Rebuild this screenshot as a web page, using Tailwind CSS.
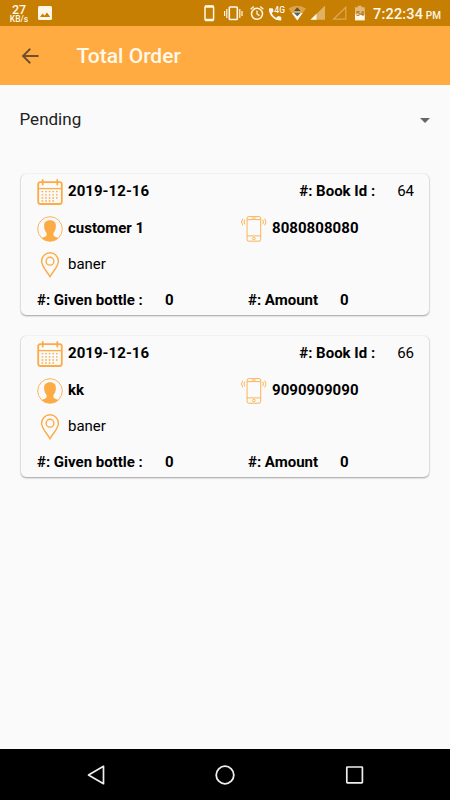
<!DOCTYPE html>
<html lang="en">
<head>
    <meta charset="UTF-8">
    <meta name="viewport" content="width=device-width, initial-scale=1.0">
    <title>Total Order</title>
    <script src="https://cdn.jsdelivr.net/npm/@tailwindcss/browser@4"></script>
</head>
<body class="bg-[#fafafa] font-['Roboto',sans-serif] text-black">
    <!-- shared icons -->
    <svg class="hidden">
        <symbol id="calendar" viewBox="0 0 26 26">
            <g fill="none" stroke="#fcab45">
                <rect x="1.2" y="3.2" width="23.6" height="21.8" rx="2.2" stroke-width="1.8"/>
                <path d="M1.5 9.6h23" stroke-width="1.3"/>
                <path d="M5.7 1v4.5M20.3 1v4.5" stroke-width="1.8" stroke-linecap="round"/>
                <path d="M4.600 12.600h17.500M4.600 15.800h17.500M4.600 19h17.500M4.600 22h14" stroke-width="1.300" stroke-dasharray="1.600 2"/>
            </g>
        </symbol>
        <symbol id="user" viewBox="0 0 26 26">
            <circle cx="13" cy="13" r="12.3" fill="none" stroke="#fcab45" stroke-width=".9"/>
            <path fill="#fcab45" d="M13 4.200c3.900 0 6 2.200 5.900 5.700 0 1.800-.3 3.400-1 4.800-.4.900-.9 1.700-1.500 2.300v2.400c.8 1.300 3.700 1.600 5.100 2.700C19.200 24.300 16.300 25.300 13 25.300s-6.200-1-8.500-3.200c1.400-1.100 4.300-1.400 5.100-2.700v-2.400c-.6-.6-1.100-1.400-1.500-2.300-.7-1.400-1-3-1-4.800C7 6.400 9.100 4.200 13 4.200z"/>
        </symbol>
        <symbol id="pin" viewBox="0 0 26 26">
            <g fill="none" stroke="#fcab45" stroke-width="1.4">
                <path d="M13 24.800C10.500 20 4.600 14.500 4.600 9.200a8.400 8.400 0 0 1 16.800 0C21.400 14.500 15.500 20 13 24.800z"/>
                <circle cx="13" cy="9.200" r="3.900"/>
            </g>
        </symbol>
        <symbol id="phone" viewBox="0 0 26 26">
            <g fill="none" stroke="#fcab45" stroke-width=".9">
                <rect x="6.100" y=".6" width="13.600" height="24.600" rx="1.600"/>
                <path d="M6.100 3.600h13.600M6.100 19.900h13.600M11.100 2.100h3.600"/>
                <circle cx="12.900" cy="22.500" r="1.300"/>
                <path d="M3.800 3.700q-1.500 2.300 0 4.600M1.800 2.600q-2.600 3.400 0 6.800M21.700 3.700q1.500 2.300 0 4.600M23.700 2.600q2.600 3.400 0 6.800"/>
            </g>
        </symbol>
    </svg>

    <div class="flex h-[800px] w-[450px] flex-col overflow-hidden">
        <!-- status bar -->
        <div class="flex h-[26px] shrink-0 items-center justify-between bg-[#c67e03] pr-[9px] pl-[9px] text-[#fff8e8]">
            <div class="flex items-center gap-[9px]">
                <div class="flex w-5 flex-col items-center pt-px font-medium">
                    <span class="text-[12.5px] leading-[11px]">27</span>
                    <span class="text-[8.5px] leading-[9px]">KB/s</span>
                </div>
                <svg class="size-[14px]" viewBox="0 0 14 14">
                    <rect width="14" height="14" rx="1.5" fill="#fff8e8"/>
                    <path d="M2 11l2.600-3.500 1.900 2.200L9 6.400 12.200 11z" fill="#c67e03"/>
                </svg>
            </div>
            <div class="flex items-center">
                <svg class="h-[26px] w-[164px]" viewBox="204 0 164 26">
                    <g fill="none" stroke="#fff8e8">
                        <rect x="205" y="6.300" width="8.600" height="14" rx="1" stroke-width="1.500"/>
                        <path d="M205 6.500h8.600M205 20h8.600" stroke-width="2.400"/>
                        <rect x="229.300" y="7" width="8" height="12.500" rx=".8" stroke-width="1.600"/>
                        <path d="M226.800 9v9M224.600 11v5M239.800 9v9M242 11v5" stroke-width="1.200"/>
                        <circle cx="257" cy="13.800" r="5.500" stroke-width="1.500"/>
                        <path d="M257 10.500v3.500l2.500 1.600M250.700 9.200l3-2.600M263.300 9.200l-3-2.600" stroke-width="1.300"/>
                    </g>
                    <path fill="#fff8e8" d="M269.600 8.300h2.700c.4 0 .6.200.7.600l.5 2.400-1.700 1.900c1.100 2 2.500 3.500 4.500 4.600l1.900-1.700 2.500.6c.4.100.6.300.6.700v2.500c0 .4-.3.700-.7.700C274 20.600 269 15.200 268.900 9c0-.4.300-.7.700-.7z"/>
                    <text x="274.300" y="12.800" font-size="8.500" font-weight="500" fill="#fff8e8">4G</text>
                    <path d="M288.500 8.500q8.500-5.500 17.500 0L297.300 20.500z" fill="#d9a44a"/>
                    <path d="M291.800 13h10.800l-5.300 7.500z" fill="#fff8e8"/>
                    <path d="M294 11l3.300-3.800 3.300 3.800z" fill="#5e4c33"/>
                    <path d="M294 13h6.600l-3.300 3.200z" fill="#3c6291"/>
                    <path d="M310.500 19.700L325 5.500v14.200z" fill="#e0b163"/>
                    <path d="M310.500 19.700L316.500 13.800v5.900z" fill="#fff8e8"/>
                    <path d="M333.500 19.200L345.800 7.200v12z" fill="none" stroke="#dda953" stroke-width="1.200"/>
                    <path d="M355 7.200h2.800V5.700h4v1.500h3v7H355z" fill="#e3b976"/>
                    <path d="M355 14h9.800v6.400H355z" fill="#fff8e8"/>
                    <text x="355.700" y="15.800" font-size="7.500" font-weight="700" fill="#b07928">54</text>
                </svg>
                <div class="mt-[3px] ml-[5px] flex w-[68px] items-baseline justify-between font-medium whitespace-nowrap">
                    <span class="text-[14.5px] tracking-[.2px]">7:22:34</span>
                    <span class="text-[10px]">PM</span>
                </div>
            </div>
        </div>

        <!-- app bar -->
        <header class="flex h-[59px] shrink-0 items-center bg-[#ffab41] pl-[21px]">
            <svg class="h-4 w-[18px]" viewBox="0 0 18 16" fill="none" stroke="#70502a" stroke-width="1.900">
                <path d="M17.500 8H2M9.300 .8L2 8l7.300 7.200"/>
            </svg>
            <h1 class="mt-[2px] ml-[37.5px] text-[21px] font-medium text-[#fff9ec]">Total Order</h1>
        </header>

        <main class="flex-1">
            <div class="flex h-[70px] items-center justify-between pr-5 pl-[19.5px]">
                <span class="text-[17px] text-[#222]">Pending</span>
                <svg class="h-[5px] w-[10px]" viewBox="0 0 10 5"><path d="M0 0h10L5 5z" fill="#666"/></svg>
            </div>

            <div class="mt-[19px] flex flex-col gap-[21px] px-[21px] text-[15px] leading-[18px]">
                <section class="h-[141px] rounded-[5px] bg-[#fafafa] px-4 pt-[5px] shadow-[0_1px_2px_rgba(0,0,0,.35),0_0_1px_rgba(0,0,0,.2)]">
                    <div class="flex h-9 items-start">
                        <svg class="size-[26px]"><use href="#calendar"/></svg>
                        <b class="mt-[3px] ml-[5px] tracking-[.05px]">2019-12-16</b>
                        <b class="mt-[3px] ml-auto">#: Book Id :</b>
                        <span class="mt-[3px] -mr-px ml-[22px]">64</span>
                    </div>
                    <div class="flex h-9 items-start pt-px">
                        <svg class="size-[26px]"><use href="#user"/></svg>
                        <b class="mt-[3px] ml-[5px] w-[173px]">customer 1</b>
                        <svg class="size-[26px]"><use href="#phone"/></svg>
                        <b class="mt-[3px] ml-[5px] tracking-[.05px]">8080808080</b>
                    </div>
                    <div class="flex h-9 items-start pt-px">
                        <svg class="size-[26px]"><use href="#pin"/></svg>
                        <span class="mt-[3px] ml-[5px]">baner</span>
                    </div>
                    <div class="flex pt-1 font-bold">
                        <span class="w-[128px]">#: Given bottle :</span>
                        <span class="w-[83px]">0</span>
                        <span class="w-[92px]">#: Amount</span>
                        <span>0</span>
                    </div>
                </section>

                <section class="h-[141px] rounded-[5px] bg-[#fafafa] px-4 pt-[5px] shadow-[0_1px_2px_rgba(0,0,0,.35),0_0_1px_rgba(0,0,0,.2)]">
                    <div class="flex h-9 items-start">
                        <svg class="size-[26px]"><use href="#calendar"/></svg>
                        <b class="mt-[3px] ml-[5px] tracking-[.05px]">2019-12-16</b>
                        <b class="mt-[3px] ml-auto">#: Book Id :</b>
                        <span class="mt-[3px] -mr-px ml-[22px]">66</span>
                    </div>
                    <div class="flex h-9 items-start pt-px">
                        <svg class="size-[26px]"><use href="#user"/></svg>
                        <b class="mt-[3px] ml-[5px] w-[173px]">kk</b>
                        <svg class="size-[26px]"><use href="#phone"/></svg>
                        <b class="mt-[3px] ml-[5px] tracking-[.05px]">9090909090</b>
                    </div>
                    <div class="flex h-9 items-start pt-px">
                        <svg class="size-[26px]"><use href="#pin"/></svg>
                        <span class="mt-[3px] ml-[5px]">baner</span>
                    </div>
                    <div class="flex pt-1 font-bold">
                        <span class="w-[128px]">#: Given bottle :</span>
                        <span class="w-[83px]">0</span>
                        <span class="w-[92px]">#: Amount</span>
                        <span>0</span>
                    </div>
                </section>
            </div>
        </main>

        <!-- navigation bar -->
        <nav class="flex h-[51px] shrink-0 items-center justify-between bg-black px-[86px]">
            <svg class="size-5" viewBox="0 0 20 20" fill="none" stroke="#eee" stroke-width="1.7" stroke-linejoin="round"><path d="M17.500 1.300v17.400L2.500 10z"/></svg>
            <svg class="size-5" viewBox="0 0 20 20" fill="none" stroke="#eee" stroke-width="1.8"><circle cx="10" cy="10" r="8.8"/></svg>
            <svg class="size-5" viewBox="0 0 20 20" fill="none" stroke="#eee" stroke-width="1.7"><rect x="2.8" y="2" width="15.600" height="15.800" rx=".5"/></svg>
        </nav>
    </div>
</body>
</html>
